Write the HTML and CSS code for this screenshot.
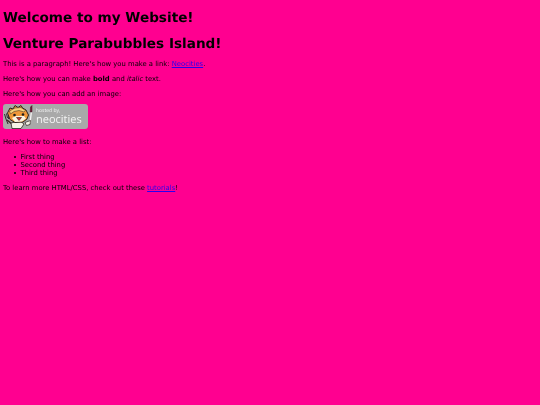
FILE: index.html
```html
<!DOCTYPE html>
<html lang="en">
<head>
<meta charset="utf-8">
<title>Venture Parabubbles Island</title>
<link rel="stylesheet" href="styles.css">
</head>
<body>
<h1>Welcome to my Website!</h1>
<h1 class="second">Venture Parabubbles Island!</h1>
<p>This is a paragraph! Here's how you make a link: <a href="#">Neocities</a>.</p>
<p>Here's how you can make <strong>bold</strong> and <em>italic</em> text.</p>
<p class="before-badge">Here's how you can add an image:</p>
<div class="badge">
<svg class="cat" viewBox="0 0 30 25" width="30" height="25" aria-hidden="true">
<path d="M1.500 10 L3 15 L5 20 M3.500 9.500 L4.500 14 M6 10 L5.500 15" stroke="#2c2c2c" stroke-width="1" fill="none"/>
<path d="M4 16 L9 20" stroke="#3a2a20" stroke-width="1.600"/>
<path d="M8 19 L17 17 L21 20 L18 24.500 L9 24.500 Z" fill="#f6f2e6" stroke="#2c2420" stroke-width=".8"/>
<path d="M4.500 9 L7 4 L10 5 L12 1.500 L15 3.500 L18 1.500 L19.500 4 L23 6 L25.500 11 L24 15 L20 18 L12 18.500 L7 15.500 Z" fill="#f0983a" stroke="#2c2420" stroke-width="1"/>
<path d="M6.500 7 L12 4 L18 3.500 L22.500 6.500 L21 8 L16 6.500 L11 7.500 L7.500 10 Z" fill="#f7d27a" stroke="#2c2420" stroke-width=".5"/>
<path d="M9 14 L13 12 L21 12 L23 14.500 L19 17.500 L12 18 Z" fill="#fcf5e4"/>
<circle cx="11.500" cy="11" r="1.300" fill="#1c1c1c"/>
<circle cx="20" cy="10.500" r="1.300" fill="#1c1c1c"/>
<path d="M13.500 13.500 L16 16.500 L18.500 13.500 Z" fill="#c8342c" stroke="#3a1a1a" stroke-width=".6"/>
<path d="M28.500 7 L27 19" stroke="#f2f2f2" stroke-width="1.400"/>
<path d="M29 1.500 L27.500 3 L27.200 8 L29 8 Z" fill="#7a1f3a" stroke="#3a1020" stroke-width=".5"/>
<path d="M22 18.500 L27.500 16.500 L27 20.500 L23.500 21.500 Z" fill="#f6f2e6" stroke="#2c2420" stroke-width=".7"/>
</svg>
<div class="badge-text">
<span class="hosted">hosted by,</span>
<span class="neo">neocities</span>
</div>
</div>
<p>Here's how to make a list:</p>
<ul>
<li>First thing</li>
<li>Second thing</li>
<li>Third thing</li>
</ul>
<p>To learn more HTML/CSS, check out these <a href="#">tutorials</a>!</p>
</body>
</html>
```
FILE: styles.css
```css
html {
  background: #ff0090;
}
body {
  margin: 0;
  padding: 9px 3px 0;
  color: #000;
  font-family: "DejaVu Sans", Verdana, sans-serif;
  font-size: 6.820px;
  line-height: 8px;
  text-rendering: geometricPrecision;
  filter: blur(.3px);
}
h1 {
  margin: 0 0 8px;
  font-size: 13.620px;
  line-height: 18px;
  font-weight: 700;
}
h1.second {
  margin-bottom: 7px;
}
p {
  margin: 0 0 7px;
}
p.before-badge {
  margin-bottom: 6px;
}
a {
  color: #2a00ee;
}
.badge {
  display: flex;
  align-items: center;
  box-sizing: border-box;
  width: 85px;
  height: 25px;
  margin: 0 0 9px;
  background: #a9a9a9;
  border-radius: 3px;
  overflow: hidden;
}
.cat {
  flex: none;
}
.badge-text {
  display: flex;
  flex-direction: column;
  margin-left: 3px;
  color: #f4f4f4;
  font-family: "Open Sans", sans-serif;
}
.hosted {
  font-size: 5px;
  line-height: 6px;
}
.neo {
  font-size: 11px;
  line-height: 11px;
}
ul {
  margin: 0 0 7px;
  padding-left: 10.500px;
  list-style: none;
}
li::before {
  content: "";
  display: inline-block;
  width: 2.500px;
  height: 2.500px;
  margin-right: 4.500px;
  border-radius: 50%;
  background: #000;
  vertical-align: 1px;
}
```
